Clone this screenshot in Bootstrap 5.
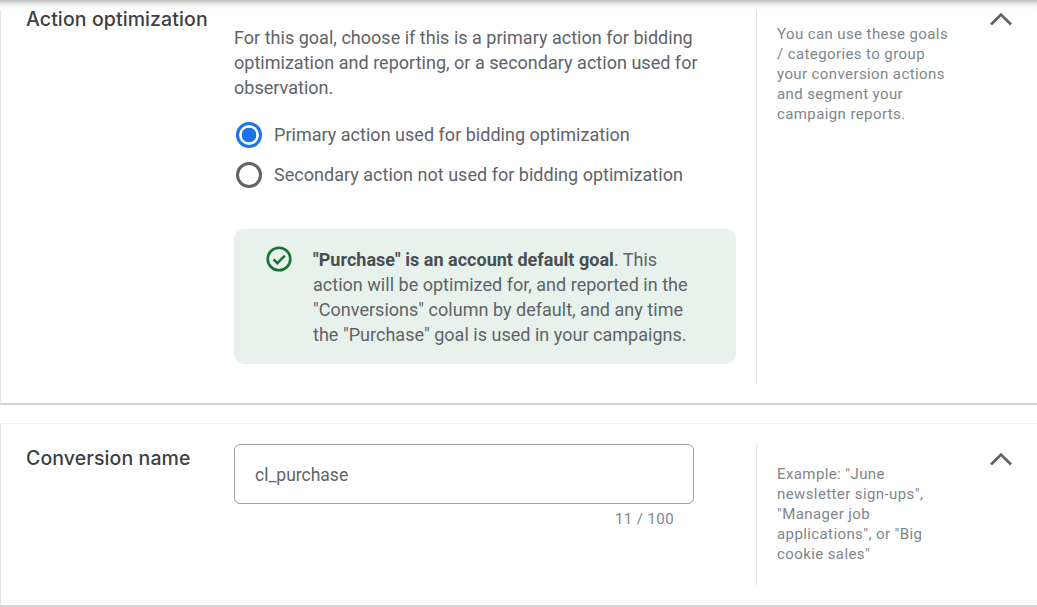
<!DOCTYPE html>
<html lang="en">
<head>
<meta charset="utf-8">
<title>Conversion settings</title>
<link href="https://cdn.jsdelivr.net/npm/bootstrap@5.3.0/dist/css/bootstrap.min.css" rel="stylesheet">
<style>
html,body{height:607px;overflow:hidden}
body{background:#fff;font-family:Roboto,"Liberation Sans",sans-serif;color:#5f6368;font-size:18px;line-height:25px;letter-spacing:.02px}
.top-shade{height:10px;background:linear-gradient(#b9b9b9,#e4e4e4 30%,#f8f8f8 70%,#fff);margin-bottom:-10px;position:relative}
.sect{border-left:1px solid #e6e6e6}
.sect-a{height:405px;border-bottom:2px solid #d2d2d2}
.sect-b{height:182px;border-top:1px solid #efefef;border-bottom:0;margin-top:18px}
.gap-end{height:3px;background:#d4d4d4}
.label-col{width:233px;flex:none;padding-left:25px;font-family:Inter,"Open Sans",sans-serif;font-size:19.5px;font-weight:500;color:#3c4043;letter-spacing:.1px}
.sect-a .label-col{padding-top:7px}
.sect-b .label-col{padding-top:22px}
.main-col{width:522px;flex:none}
.sect-a .main-col{padding-top:25px}
.sect-b .main-col{padding-top:20px}
.note-col{width:233px;flex:none;border-left:1px solid #e0e0e0;padding-left:20px;font-size:15px;line-height:20px;letter-spacing:.4px;color:#80868b}
.sect-a .note-col{height:384px;padding-top:24px}
.sect-b .note-col{height:141px;margin-top:20px;padding-top:20px}
.note-col p{width:175px}
.chev-col{flex:none;width:48px}
.sect-a .chev-col{padding-top:12px}
.sect-b .chev-col{padding-top:28px}
.chev-col svg{display:block}
.intro{width:480px;margin-bottom:14px}
.choice{padding-left:2px;margin-bottom:0;height:40px;min-height:0;gap:12px}
.choice .form-check-input{width:26px;height:26px;margin:2px 0 0;float:none;flex:none;border:3px solid #5f6368;background:#fff}
.choice .form-check-input:checked{border-color:#1a73e8;background:radial-gradient(circle,#1a73e8 0,#1a73e8 7px,#fff 7.6px)}
.choice .form-check-input:focus{box-shadow:none}
.choice .form-check-label{color:#5f6368}
.good-box{width:502px;height:135px;margin-top:35px;background:#e6f2eb;border-radius:10px;padding:18px 40px 0 32px;gap:21px}
.good-box svg{flex:none;margin-top:-1px}
.good-box b{font-weight:700;color:#4a4e52}
.name-input.form-control{width:460px;height:60px;border:1px solid #9aa0a6;border-radius:6px;padding:2px 20px 0;font-size:17.5px;color:#5f6368;box-shadow:none}
.counter{width:440px;font-size:15px;line-height:20px;letter-spacing:.4px;color:#80868b;margin-top:5px}
</style>
</head>
<body>
<div class="top-shade"></div>

<section class="sect sect-a d-flex">
  <div class="label-col">Action optimization</div>
  <div class="main-col">
    <p class="intro">For this goal, choose if this is a primary action for bidding optimization and reporting, or a secondary action used for observation.</p>
    <div class="form-check choice d-flex align-items-center">
      <input class="form-check-input" type="radio" name="act" id="r1" checked>
      <label class="form-check-label" for="r1">Primary action used for bidding optimization</label>
    </div>
    <div class="form-check choice d-flex align-items-center">
      <input class="form-check-input" type="radio" name="act" id="r2">
      <label class="form-check-label" for="r2">Secondary action not used for bidding optimization</label>
    </div>
    <div class="good-box d-flex">
      <svg width="26" height="26" viewBox="0 0 26 26" fill="none" stroke="#137333" stroke-width="2.6"><circle cx="13" cy="13" r="11.3"/><path d="M7.6 13.4l3.8 3.8 7.4-7.6" stroke-width="2.4"/></svg>
      <div><b>"Purchase" is an account default goal</b>. This action will be optimized for, and reported in the "Conversions" column by default, and any time the "Purchase" goal is used in your campaigns.</div>
    </div>
  </div>
  <div class="note-col"><p>You can use these goals / categories to group your conversion actions and segment your campaign reports.</p></div>
  <div class="chev-col"><svg width="24" height="14" viewBox="0 0 24 14" fill="none" stroke="#5f6368" stroke-width="2.8"><path d="M2 12.5L12 2.6l10 9.9"/></svg></div>
</section>

<section class="sect sect-b d-flex">
  <div class="label-col">Conversion name</div>
  <div class="main-col">
    <input class="form-control name-input" type="text" value="cl_purchase" aria-label="Conversion name">
    <div class="counter text-end">11 / 100</div>
  </div>
  <div class="note-col"><p>Example: "June newsletter sign-ups", "Manager job applications", or "Big cookie sales"</p></div>
  <div class="chev-col"><svg width="24" height="14" viewBox="0 0 24 14" fill="none" stroke="#5f6368" stroke-width="2.8"><path d="M2 12.5L12 2.6l10 9.9"/></svg></div>
</section>
<div class="gap-end"></div>
<script src="https://cdn.jsdelivr.net/npm/bootstrap@5.3.0/dist/js/bootstrap.bundle.min.js"></script>
</body>
</html>
